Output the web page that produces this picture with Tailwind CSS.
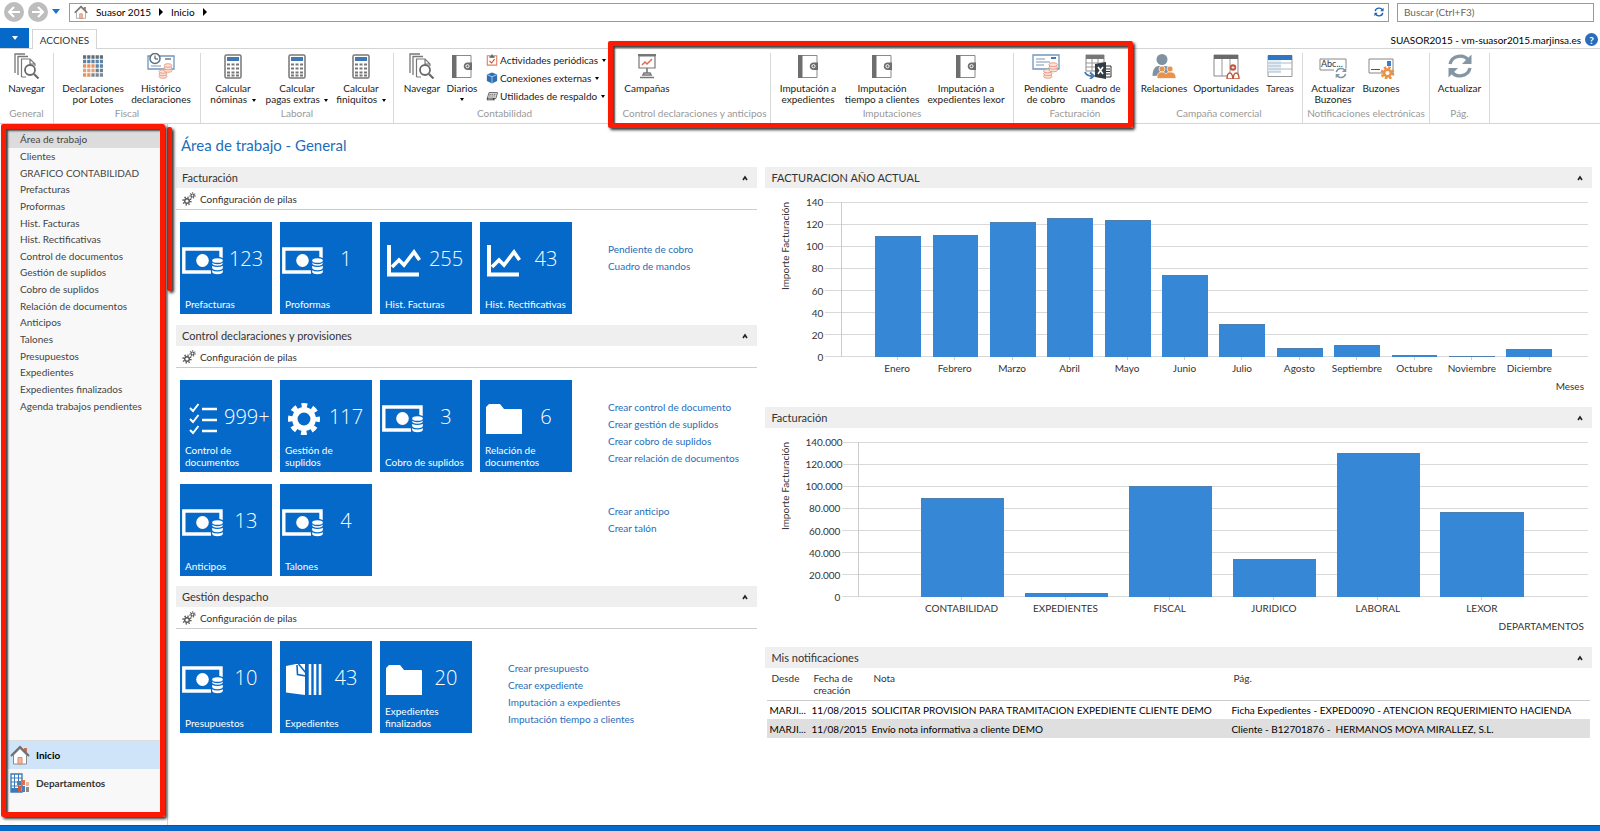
<!doctype html>
<html lang="es">
<head>
  <meta charset="UTF-8">
  <meta name="viewport" content="width=device-width, initial-scale=1.0">
  <script src="https://cdn.jsdelivr.net/npm/@tailwindcss/browser@4"></script>
  <title>Suasor 2015 - Inicio</title>
</head>
<body class="flex h-screen flex-col overflow-hidden bg-white font-['Lato','Open_Sans',sans-serif] text-[10px] leading-3 text-[#333]">

  <!-- Icon sprite -->
  <svg class="hidden">
    <symbol id="i-house" viewBox="0 0 20 20">
      <path d="M14 3h3v5l-3-3z" fill="#c96f4c"/>
      <path d="M3.5 10v9h13v-9L10 3.5z" fill="#fff" stroke="#8a8a8a"/>
      <path d="M1 11 10 2l9 9" fill="none" stroke="#6e6e6e" stroke-width="2"/>
      <path d="M8 12.500h4V19H8z" fill="#f0b8a0" stroke="#d98a6c"/>
    </symbol>
    <symbol id="i-pages" viewBox="0 0 26 26">
      <path d="M1 20V1h10M4 22V3.500h10" fill="none" stroke="#777" stroke-width="1.300"/>
      <path d="M7.500 24V6H16l5 5v2M16 6v5h5M7.500 24H12" fill="none" stroke="#777" stroke-width="1.200"/>
      <circle cx="16" cy="17" r="5" fill="#fff" stroke="#6a6a6a" stroke-width="1.800"/>
      <path d="m20 21 4.500 4.500" stroke="#6a6a6a" stroke-width="2.200"/>
    </symbol>
    <symbol id="i-declgrid" viewBox="0 0 26 26">
      <g stroke-width="3.400" stroke-dasharray="3.200 1" fill="none">
        <path d="M3 4h20" stroke="#5f6f7a"/><path d="M3 8.500h20" stroke="#5b84a8"/>
        <path d="M3 13h12.500" stroke="#e8935f"/><path d="M15.600 13H23" stroke="#5b84a8"/>
        <path d="M3 17.500h12.500" stroke="#e8a07a"/><path d="M15.600 17.500H23" stroke="#6a7f90"/>
        <path d="M3 22h8.300" stroke="#e8935f"/><path d="M11.400 22H23" stroke="#7a8894"/>
      </g>
    </symbol>
    <symbol id="i-coins" viewBox="0 0 14 16">
      <g fill="#fbe3da" stroke="#e59a80" stroke-width=".9">
        <ellipse cx="4.500" cy="13.500" rx="4" ry="1.800"/><ellipse cx="4.500" cy="11" rx="4" ry="1.800"/><ellipse cx="4.500" cy="8.500" rx="4" ry="1.800"/>
        <ellipse cx="9.500" cy="7.500" rx="4" ry="1.800"/><ellipse cx="9.500" cy="5" rx="4" ry="1.800"/><ellipse cx="9.500" cy="2.500" rx="4" ry="1.800"/>
      </g>
    </symbol>
    <symbol id="i-cheque" viewBox="0 0 28 26">
      <path d="M1 2h26v14H1z" fill="#fff" stroke="#6f96bd" stroke-width="1.300"/>
      <path d="M4 6h9M4 9h14M4 12h8" stroke="#7b97b2"/><path d="M19 5h5" stroke="#3f78b5" stroke-width="2"/>
      <use href="#i-coins" x="9" y="9" width="19" height="17"/>
    </symbol>
    <symbol id="i-history" viewBox="0 0 28 26">
      <path d="M1 3h26v13H1z" fill="#fff" stroke="#6f96bd" stroke-width="1.300"/>
      <path d="M4 13h10" stroke="#7b97b2"/><path d="M18 6h6" stroke="#777" stroke-width="1.500"/>
      <circle cx="8" cy="5.500" r="5" fill="#fff" stroke="#5a6f83" stroke-width="1.500"/>
      <path d="M8 2.500v3.500h3" fill="none" stroke="#444"/>
      <use href="#i-coins" x="9" y="10" width="19" height="16"/>
    </symbol>
    <symbol id="i-calc" viewBox="0 0 26 26">
      <rect x="5" y="2" width="16" height="23" rx="1.500" fill="#fff" stroke="#777" stroke-width="1.500"/>
      <path d="M7 4h12v4H7z" fill="#3f78b5"/>
      <path d="M7 11.500h12M7 15.500h12M7 19.500h12M7 22.500h12" stroke="#777" stroke-width="2" stroke-dasharray="3 1.500"/>
    </symbol>
    <symbol id="i-book" viewBox="0 0 26 26">
      <path d="M4 2.500h18v22H4z" fill="#fff" stroke="#8a8a8a"/>
      <path d="M3 2h4.500v23H3z" fill="#6e6e6e"/>
      <path d="M23 9.500h-5a3.800 3.800 0 0 0 0 7.500h5z" fill="#6e6e6e"/>
      <circle cx="18.500" cy="13.200" r="1.600" fill="none" stroke="#fff"/>
    </symbol>
    <symbol id="i-clipboard" viewBox="0 0 14 14">
      <path d="M1.500 2h11v11h-11z" fill="#fff" stroke="#df7f62" stroke-width="1.300"/>
      <path d="M4 3.500h6M7 .5v3" stroke="#555" stroke-width="1.500"/><path d="m4 8 2.500 2.500L10 6" fill="none" stroke="#d9482b" stroke-width="1.300"/>
    </symbol>
    <symbol id="i-cube" viewBox="0 0 14 14">
      <path d="m7 .5 6 2.500v7.500l-6 3-6-3V3z" fill="#2f6fb3"/><path d="m1 3 6 2.500L13 3M7 5.500v8" fill="none" stroke="#b9d3ee"/>
    </symbol>
    <symbol id="i-keys" viewBox="0 0 14 12">
      <path d="M3.500 2h10l-2 7h-10z" fill="#eee" stroke="#555"/><path d="M4 4h8M3.500 6h8" stroke="#555" stroke-dasharray="2 .6"/><path d="M1 8h9v3H1z" fill="#444"/><path d="M2 9.500h6" stroke="#ddd"/>
    </symbol>
    <symbol id="i-board" viewBox="0 0 26 26">
      <path d="M4 1h18v2H4z" fill="#777"/><path d="M5 3h16v12H5z" fill="#fff" stroke="#777" stroke-width="1.200"/>
      <path d="m8 12 3-3 2 2 5-5" fill="none" stroke="#e0694c" stroke-width="1.500"/>
      <path d="M13 15v5M10 20h6l1 2h-8zM6 24.500h14" fill="none" stroke="#777" stroke-width="1.600"/>
    </symbol>
    <symbol id="i-excel" viewBox="0 0 28 26">
      <path d="M2 2h18v16H2z" fill="#fff" stroke="#888"/><path d="M2 2h18v4H2z" fill="#777"/><path d="M2 10h18M2 14h18M8 6v12M14 6v12" stroke="#999"/>
      <path d="M18 13h9v11h-9z" fill="#fff" stroke="#333"/><path d="M20 16h6M20 18.500h6M20 21h6" stroke="#333"/>
      <path d="m11 11 11-2v17l-11-2z" fill="#333c44"/><path d="m14 14 5 7M19 14l-5 7" stroke="#fff" stroke-width="1.600"/>
      <path d="M1 19c1 3 4 4 7 4M6 19.500l4 3.500-4 3" fill="none" stroke="#3f78b5" stroke-width="1.800"/>
    </symbol>
    <symbol id="i-people" viewBox="0 0 26 26">
      <circle cx="11" cy="6.500" r="5.500" fill="#7f92a3"/><path d="M1.500 23c0-7 3-10 6-10h7c4 0 6 4 6 9z" fill="#7f92a3"/>
      <g fill="#ea9248" stroke="#fff" stroke-width=".7"><circle cx="11" cy="16" r="3"/><circle cx="19" cy="16" r="3"/><path d="M6 25.500c0-5 2-6.500 5-6.500 2 0 3 .5 4 2 1-1.500 2-2 4-2 4 0 6 2 6 6.500z"/></g>
    </symbol>
    <symbol id="i-opps" viewBox="0 0 26 26">
      <path d="M1 2h24v21H1z" fill="#fff" stroke="#888"/><path d="M1 2h24v4H1z" fill="#6a6a6a"/><path d="M9 6v17M17 6v17" stroke="#999"/>
      <circle cx="20" cy="14.500" r="3.200" fill="#c2553f"/><path d="M20 13v3M18.500 14.500h3" stroke="#fff" stroke-width=".8"/>
      <path d="M14 26c0-4 1-6 3-6s2.500 2 3 6zM20 26c.5-4 1-6 3-6s3 2 3 6z" fill="#fff" stroke="#c2553f" stroke-width="1.400"/>
    </symbol>
    <symbol id="i-tasks" viewBox="0 0 26 26">
      <path d="M1 2.500h24v21H1z" fill="#fff" stroke="#999"/><path d="M1 2h24v5H1z" fill="#2f77bf"/>
      <path d="M1 7h13v12H1z" fill="#e6edf4"/><path d="M1 10h24M1 13h13M1 16h24M1 19h13" stroke="#a9bccd"/>
    </symbol>
    <symbol id="i-sync" viewBox="0 0 26 26">
      <path d="M3 11C5 2 17 1 21 7" fill="none" stroke="#8496a6" stroke-width="3.400"/><path d="M24.500 1.500v9.500H15z" fill="#8496a6"/>
      <path d="M23 15c-2 9-14 10-18 4" fill="none" stroke="#8496a6" stroke-width="3.400"/><path d="M1.500 24.500V15H11z" fill="#8496a6"/>
    </symbol>
    <symbol id="i-field" viewBox="0 0 28 26">
      <path d="M1 6h26v11H1z" fill="#fff" stroke="#888"/>
      <text x="2" y="14" font-size="9" fill="#333">Abc...</text>
      <path d="M15 15h13v12H15z" fill="#fff"/><use href="#i-sync" x="16" y="14" width="12" height="12"/>
    </symbol>
    <symbol id="i-mail" viewBox="0 0 26 26">
      <path d="M1 6h24v14H1z" fill="#fff" stroke="#888"/><path d="M19 8h4v5h-4z" fill="#3b7cd0"/><path d="M3 16.500h9" stroke="#555"/>
      <circle cx="19.500" cy="20" r="5.500" fill="none" stroke="#ea9248" stroke-width="2.600" stroke-dasharray="2.500 1.820"/>
      <circle cx="19.500" cy="20" r="3.400" fill="#fff" stroke="#ea9248" stroke-width="2.600"/>
    </symbol>
    <symbol id="i-office" viewBox="0 0 20 20">
      <path d="M1 1h11v18H1z" fill="#fff" stroke="#3b7ab8" stroke-width="1.400"/><path d="M1 5h11M1 9h11M1 13h11M4.500 1v14M8.500 1v14" stroke="#3b7ab8"/><path d="M1 15h7v4H1z" fill="#3b7ab8"/>
      <path d="M7 8h4v4H7z" fill="#4a7fb5"/><path d="M11 7h4v5h-4z" fill="#de6f4f"/><path d="M16 9h3v4h-3z" fill="#f0b19b"/>
      <path d="M8 13h3v6H8z" fill="#d9583a"/><path d="M12 13h3v6h-3z" fill="#4a7fb5"/><path d="M16 14h3v5h-3z" fill="#8a8a8a"/>
    </symbol>
    <symbol id="i-gears" viewBox="0 0 14 14">
      <g fill="none" stroke="#555"><circle cx="5" cy="9" r="2.300" stroke-width="1.400"/><circle cx="5" cy="9" r="3.800" stroke-width="1.700" stroke-dasharray="1.300 1.684"/>
      <circle cx="10.500" cy="3.500" r="1.500" stroke-width="1.200"/><circle cx="10.500" cy="3.500" r="2.600" stroke-width="1.300" stroke-dasharray="1 1.330"/></g>
    </symbol>
    <!-- Tile icons -->
    <symbol id="t-money" viewBox="0 0 42 32">
      <path d="M39 13V4H1.800v23H29" fill="none" stroke="#fff" stroke-width="3.400"/>
      <ellipse cx="20.500" cy="15.500" rx="6.300" ry="6.500" fill="#fff"/>
      <g fill="#fff" stroke="#0569c9" stroke-width="1.300"><path d="M29.500 24v2.500c0 4.500 12 4.500 12 0V24z"/><path d="M29.500 20v2.500c0 4.500 12 4.500 12 0V20z"/><path d="M29.500 15v3c0 4.500 12 4.500 12 0v-3z"/><ellipse cx="35.500" cy="15.500" rx="6" ry="3"/></g>
    </symbol>
    <symbol id="t-line" viewBox="0 0 42 32">
      <path d="M7 0v29.500h30" fill="none" stroke="#fff" stroke-width="4"/>
      <path d="m10 22 7-7 5 5 10-13 5.500 8" fill="none" stroke="#fff" stroke-width="3.600"/>
    </symbol>
    <symbol id="t-checks" viewBox="0 0 42 32">
      <path d="m8 5 3 3 5.500-7M8 16l3 3 5.500-7M8 27l3 3 5.500-7" fill="none" stroke="#fff" stroke-width="2"/>
      <path d="M20 6h15M20 17h15M20 28h15" stroke="#fff" stroke-width="2.600"/>
    </symbol>
    <symbol id="t-gear" viewBox="0 0 42 32">
      <circle cx="22" cy="16" r="9.200" fill="none" stroke="#fff" stroke-width="5.500"/>
      <circle cx="22" cy="16" r="13.500" fill="none" stroke="#fff" stroke-width="5" stroke-dasharray="5.600 5" stroke-dashoffset="2.800"/>
    </symbol>
    <symbol id="t-folder" viewBox="0 0 42 32">
      <path d="M4 31V4l3-3h11l4 5h17.500l.5 1v24z" fill="#fff"/>
    </symbol>
    <symbol id="t-docs" viewBox="0 0 42 32">
      <path d="M4 2 14 0h9v31L4 28.500z" fill="#fff"/><path d="m15 1 .5 9.500 8.500 1.500M16.500 0 24 9" fill="none" stroke="#0569c9" stroke-width="1.600"/>
      <path d="M23.500 0h3v31h-3z" fill="#0569c9"/><path d="M28 0v31M33 0v31M38 0v31" stroke="#fff" stroke-width="2.600"/>
    </symbol>
  </svg>

  <!-- Address bar -->
  <header class="flex h-6 shrink-0 items-center pr-1.5">
    <div class="flex w-[69px] items-center gap-1 pl-1">
      <button aria-label="Atrás" class="size-5 rounded-full bg-[#bdbdbd]"><svg viewBox="0 0 20 20"><path d="M16 10H5M10 5l-5 5 5 5" fill="none" stroke="#fff" stroke-width="2"/></svg></button>
      <button aria-label="Adelante" class="size-5 rounded-full bg-[#bdbdbd]"><svg viewBox="0 0 20 20"><path d="M4 10h11M10 5l5 5-5 5" fill="none" stroke="#fff" stroke-width="2"/></svg></button>
      <button aria-label="Historial"><svg class="h-1.5 w-2" viewBox="0 0 8 6"><path d="M0 0h8L4 5z" fill="#1b74c9"/></svg></button>
    </div>
    <nav class="flex h-[19px] flex-1 items-center gap-2 border border-[#9a9a9a] px-1 text-black">
      <svg class="size-3.5"><use href="#i-house"/></svg>
      <a href="#">Suasor 2015</a>
      <svg class="h-2 w-1" viewBox="0 0 4 8"><path d="M0 0v8l4-4z"/></svg>
      <a href="#">Inicio</a>
      <svg class="h-2 w-1" viewBox="0 0 4 8"><path d="M0 0v8l4-4z"/></svg>
      <button aria-label="Actualizar" class="ml-auto"><svg class="size-2.5" viewBox="0 0 12 12"><path d="M1.500 5c.5-4 6.500-5 8.500-1.500M10.500 7c-.5 4-6.500 5-8.500 1.500" fill="none" stroke="#1b5fb0" stroke-width="1.600"/><path d="M11.500 1v4h-4zM.5 11V7h4z" fill="#1b5fb0"/></svg></button>
    </nav>
    <input type="search" aria-label="Buscar" placeholder="Buscar (Ctrl+F3)" class="ml-2 h-[19px] w-[197px] border border-[#9a9a9a] px-1.5 outline-none placeholder:text-[#666]">
  </header>

  <!-- Tabs -->
  <div class="flex h-6 shrink-0 items-end">
    <button aria-label="Menú" class="flex h-5 w-[29px] items-center justify-center bg-[#0569c9]"><svg class="h-1 w-1.5" viewBox="0 0 6 4"><path d="M0 0h6L3 4z" fill="#fff"/></svg></button>
    <button class="relative z-10 -mb-px ml-[3px] h-5 w-[65px] border border-b-0 border-[#d4d4d4] bg-white">ACCIONES</button>
    <span class="ml-auto pb-0.5 text-black">SUASOR2015 - vm-suasor2015.marjinsa.es</span>
    <button aria-label="Ayuda" class="mr-0.5 mb-0.5 ml-1 size-[13px] rounded-full bg-[#2b6cb8] font-bold text-white">?</button>
  </div>

  <!-- Ribbon -->
  <div class="relative flex h-[76px] shrink-0 border-y border-[#d4d4d4] pt-1 text-center leading-[11px] text-[#222]">
    <section class="flex w-[54px] flex-col border-r border-[#d9d9d9]">
      <div class="flex flex-1 justify-center">
        <button class="flex w-13 flex-col items-center gap-1"><svg class="h-[26px] w-7"><use href="#i-pages"/></svg>Navegar</button>
      </div>
      <h2 class="h-[15px] whitespace-nowrap text-[#999]">General</h2>
    </section>
    <section class="flex w-[147px] flex-col border-r border-[#d9d9d9]">
      <div class="flex flex-1 justify-center">
        <button class="flex w-17 flex-col items-center gap-1"><svg class="h-[26px] w-7"><use href="#i-declgrid"/></svg><span>Declaraciones<br>por Lotes</span></button>
        <button class="flex w-17 flex-col items-center gap-1"><svg class="h-[26px] w-7"><use href="#i-history"/></svg><span>Histórico<br>declaraciones</span></button>
      </div>
      <h2 class="h-[15px] whitespace-nowrap text-[#999]">Fiscal</h2>
    </section>
    <section class="flex w-[193px] flex-col border-r border-[#d9d9d9]">
      <div class="flex flex-1 justify-center">
        <button class="flex w-16 flex-col items-center gap-1"><svg class="h-[26px] w-7"><use href="#i-calc"/></svg><span>Calcular<br>nóminas <svg class="ml-0.5 inline h-[3px] w-1" viewBox="0 0 4 3"><path d="M0 0h4L2 3z"/></svg></span></button>
        <button class="flex w-16 flex-col items-center gap-1"><svg class="h-[26px] w-7"><use href="#i-calc"/></svg><span class="whitespace-nowrap">Calcular<br>pagas extras <svg class="ml-0.5 inline h-[3px] w-1" viewBox="0 0 4 3"><path d="M0 0h4L2 3z"/></svg></span></button>
        <button class="flex w-16 flex-col items-center gap-1"><svg class="h-[26px] w-7"><use href="#i-calc"/></svg><span>Calcular<br>finiquitos <svg class="ml-0.5 inline h-[3px] w-1" viewBox="0 0 4 3"><path d="M0 0h4L2 3z"/></svg></span></button>
      </div>
      <h2 class="h-[15px] whitespace-nowrap text-[#999]">Laboral</h2>
    </section>
    <section class="flex w-[213px] flex-col">
      <div class="flex flex-1 pl-2">
        <button class="flex w-10 flex-col items-center gap-1"><svg class="h-[26px] w-7"><use href="#i-pages"/></svg>Navegar</button>
        <button class="flex w-10 flex-col items-center gap-1"><svg class="h-[26px] w-7"><use href="#i-book"/></svg>Diarios<svg class="h-[3px] w-1" viewBox="0 0 4 3"><path d="M0 0h4L2 3z"/></svg></button>
        <div class="flex flex-col gap-1 pl-1 whitespace-nowrap">
          <button class="flex h-3.5 items-center gap-0.5"><svg class="size-3"><use href="#i-clipboard"/></svg>Actividades periódicas <svg class="ml-0.5 h-[3px] w-1" viewBox="0 0 4 3"><path d="M0 0h4L2 3z"/></svg></button>
          <button class="flex h-3.5 items-center gap-0.5"><svg class="size-3"><use href="#i-cube"/></svg>Conexiones externas <svg class="ml-0.5 h-[3px] w-1" viewBox="0 0 4 3"><path d="M0 0h4L2 3z"/></svg></button>
          <button class="flex h-3.5 items-center gap-0.5"><svg class="size-3"><use href="#i-keys"/></svg>Utilidades de respaldo <svg class="ml-0.5 h-[3px] w-1" viewBox="0 0 4 3"><path d="M0 0h4L2 3z"/></svg></button>
        </div>
      </div>
      <h2 class="h-[15px] pl-2 whitespace-nowrap text-[#999]">Contabilidad</h2>
    </section>
    <section class="flex w-[164px] flex-col border-r border-[#d9d9d9]">
      <div class="flex flex-1 pl-2">
        <button class="flex w-16 flex-col items-center gap-1"><svg class="h-[26px] w-7"><use href="#i-board"/></svg>Campañas</button>
      </div>
      <h2 class="h-[15px] pl-3 whitespace-nowrap text-[#999]">Control declaraciones y anticipos</h2>
    </section>
    <section class="flex w-[243px] flex-col border-r border-[#d9d9d9]">
      <div class="flex flex-1 justify-center">
        <button class="flex w-17 flex-col items-center gap-1"><svg class="h-[26px] w-7"><use href="#i-book"/></svg><span>Imputación a<br>expedientes</span></button>
        <button class="flex w-20 flex-col items-center gap-1"><svg class="h-[26px] w-7"><use href="#i-book"/></svg><span>Imputación<br>tiempo a clientes</span></button>
        <button class="flex w-22 flex-col items-center gap-1"><svg class="h-[26px] w-7"><use href="#i-book"/></svg><span>Imputación a<br>expedientes lexor</span></button>
      </div>
      <h2 class="h-[15px] whitespace-nowrap text-[#999]">Imputaciones</h2>
    </section>
    <section class="flex w-[122px] flex-col">
      <div class="flex flex-1 pl-1.5">
        <button class="flex w-13 flex-col items-center gap-1"><svg class="h-[26px] w-7"><use href="#i-cheque"/></svg><span>Pendiente<br>de cobro</span></button>
        <button class="flex w-13 flex-col items-center gap-1"><svg class="h-[26px] w-7"><use href="#i-excel"/></svg><span>Cuadro de<br>mandos</span></button>
      </div>
      <h2 class="h-[15px] whitespace-nowrap text-[#999]">Facturación</h2>
    </section>
    <section class="flex w-[167px] flex-col border-r border-[#d9d9d9]">
      <div class="flex flex-1">
        <button class="flex w-14 flex-col items-center gap-1"><svg class="h-[26px] w-7"><use href="#i-people"/></svg>Relaciones</button>
        <button class="flex w-17 flex-col items-center gap-1"><svg class="h-[26px] w-7"><use href="#i-opps"/></svg>Oportunidades</button>
        <button class="flex w-10 flex-col items-center gap-1"><svg class="h-[26px] w-7"><use href="#i-tasks"/></svg>Tareas</button>
      </div>
      <h2 class="h-[15px] whitespace-nowrap text-[#999]">Campaña comercial</h2>
    </section>
    <section class="flex w-[127px] flex-col border-r border-[#d9d9d9]">
      <div class="flex flex-1 pl-1">
        <button class="flex w-13 flex-col items-center gap-1"><svg class="h-[26px] w-7"><use href="#i-field"/></svg><span>Actualizar<br>Buzones</span></button>
        <button class="flex w-11 flex-col items-center gap-1"><svg class="h-[26px] w-7"><use href="#i-mail"/></svg>Buzones</button>
      </div>
      <h2 class="h-[15px] whitespace-nowrap text-[#999]">Notificaciones electrónicas</h2>
    </section>
    <section class="flex w-[60px] flex-col border-r border-[#d9d9d9]">
      <div class="flex flex-1 justify-center">
        <button class="flex w-14 flex-col items-center gap-1"><svg class="h-[26px] w-7"><use href="#i-sync"/></svg>Actualizar</button>
      </div>
      <h2 class="h-[15px] whitespace-nowrap text-[#999]">Pág.</h2>
    </section>
    <!-- Ribbon highlight -->
    <div class="pointer-events-none absolute -top-2 left-[608px] h-[87px] w-[525px] rounded-xs border-5 border-[#fb1a04] shadow-[2px_2px_3px_#333,inset_2px_2px_2px_#444]"></div>
  </div>

  <div class="flex min-h-0 flex-1">
    <!-- Sidebar -->
    <aside class="relative flex w-[168px] shrink-0 flex-col border-r border-[#d4d4d4] pr-1.5 pb-3 pl-1.5">
      <div class="flex flex-1 flex-col bg-[#f8f8f8] pt-[7px]">
        <ul class="grid h-[283px] shrink-0 auto-rows-fr text-[#444]">
          <li class="flex items-center bg-[#dcdcdc] pl-3.5"><a href="#">Área de trabajo</a></li>
          <li class="flex items-center pl-3.5"><a href="#">Clientes</a></li>
          <li class="flex items-center pl-3.5"><a href="#">GRAFICO CONTABILIDAD</a></li>
          <li class="flex items-center pl-3.5"><a href="#">Prefacturas</a></li>
          <li class="flex items-center pl-3.5"><a href="#">Proformas</a></li>
          <li class="flex items-center pl-3.5"><a href="#">Hist. Facturas</a></li>
          <li class="flex items-center pl-3.5"><a href="#">Hist. Rectificativas</a></li>
          <li class="flex items-center pl-3.5"><a href="#">Control de documentos</a></li>
          <li class="flex items-center pl-3.5"><a href="#">Gestión de suplidos</a></li>
          <li class="flex items-center pl-3.5"><a href="#">Cobro de suplidos</a></li>
          <li class="flex items-center pl-3.5"><a href="#">Relación de documentos</a></li>
          <li class="flex items-center pl-3.5"><a href="#">Anticipos</a></li>
          <li class="flex items-center pl-3.5"><a href="#">Talones</a></li>
          <li class="flex items-center pl-3.5"><a href="#">Presupuestos</a></li>
          <li class="flex items-center pl-3.5"><a href="#">Expedientes</a></li>
          <li class="flex items-center pl-3.5"><a href="#">Expedientes finalizados</a></li>
          <li class="flex items-center pl-3.5"><a href="#">Agenda trabajos pendientes</a></li>
        </ul>
        <nav class="mt-auto mb-4 border-t border-[#ddd] font-bold">
          <a href="#" class="flex h-7 items-center gap-1.5 bg-[#cfe4f8] pl-1 text-black"><svg class="size-5"><use href="#i-house"/></svg>Inicio</a>
          <a href="#" class="flex h-7 items-center gap-1.5 pl-1"><svg class="size-5"><use href="#i-office"/></svg>Departamentos</a>
        </nav>
      </div>
      <!-- Sidebar highlight -->
      <div class="pointer-events-none absolute top-[3px] left-[167px] h-[164px] w-[5px] rounded-xs bg-[#fb1a04] shadow-[2px_2px_3px_#333]"></div>
      <div class="pointer-events-none absolute top-0 bottom-2 left-px w-[164px] rounded-xs border-5 border-[#fb1a04] shadow-[2px_2px_3px_#333,inset_2px_2px_2px_#444]"></div>
    </aside>

    <main class="flex min-w-0 flex-1 flex-col pt-[11px] pr-2 pl-2">
      <h1 class="h-8 pl-[5px] text-[15px] leading-5 text-[#1f6dba]">Área de trabajo - General</h1>
      <div class="grid grid-cols-[581fr_826fr] gap-2">

        <!-- Left column: tile groups -->
        <div>
          <section>
            <h2 class="flex h-[21px] items-center justify-between bg-[#efefef] px-1.5 pr-2 text-[11px]">Facturación <button aria-label="Contraer"><svg class="h-1.5 w-2" viewBox="0 0 8 6"><path d="M2 5l2-3 2 3" fill="none" stroke="#222" stroke-width="1.600"/></svg></button></h2>
            <button class="flex h-[22px] w-full items-center gap-1 border-b border-[#ccc] pl-1.5"><svg class="size-3.5"><use href="#i-gears"/></svg>Configuración de pilas</button>
            <div class="flex gap-9 pt-3 pb-[11px] pl-1">
              <div class="grid grid-cols-[repeat(4,92px)] gap-x-2">
                <button class="flex h-[92px] flex-col bg-[#0569c9] px-0.5 pt-[23px] pb-1 text-left text-white"><span class="flex w-full"><svg class="h-8 w-[42px] shrink-0"><use href="#t-money"/></svg><span class="flex flex-1 justify-center pr-0.5 font-['Open_Sans'] text-[20px] leading-7 font-light">123</span></span><span class="mt-auto pl-[3px]">Prefacturas</span></button>
                <button class="flex h-[92px] flex-col bg-[#0569c9] px-0.5 pt-[23px] pb-1 text-left text-white"><span class="flex w-full"><svg class="h-8 w-[42px] shrink-0"><use href="#t-money"/></svg><span class="flex flex-1 justify-center pr-0.5 font-['Open_Sans'] text-[20px] leading-7 font-light">1</span></span><span class="mt-auto pl-[3px]">Proformas</span></button>
                <button class="flex h-[92px] flex-col bg-[#0569c9] px-0.5 pt-[23px] pb-1 text-left text-white"><span class="flex w-full"><svg class="h-8 w-[42px] shrink-0"><use href="#t-line"/></svg><span class="flex flex-1 justify-center pr-0.5 font-['Open_Sans'] text-[20px] leading-7 font-light">255</span></span><span class="mt-auto pl-[3px]">Hist. Facturas</span></button>
                <button class="flex h-[92px] flex-col bg-[#0569c9] px-0.5 pt-[23px] pb-1 text-left text-white"><span class="flex w-full"><svg class="h-8 w-[42px] shrink-0"><use href="#t-line"/></svg><span class="flex flex-1 justify-center pr-0.5 font-['Open_Sans'] text-[20px] leading-7 font-light">43</span></span><span class="mt-auto pl-[3px] whitespace-nowrap">Hist. Rectificativas</span></button>
              </div>
              <div class="flex flex-col pt-[19px] leading-[17px] text-[#1f6dba]">
                <a href="#">Pendiente de cobro</a>
                <a href="#">Cuadro de mandos</a>
              </div>
            </div>
          </section>

          <section>
            <h2 class="flex h-[21px] items-center justify-between bg-[#efefef] px-1.5 pr-2 text-[11px]">Control declaraciones y provisiones <button aria-label="Contraer"><svg class="h-1.5 w-2" viewBox="0 0 8 6"><path d="M2 5l2-3 2 3" fill="none" stroke="#222" stroke-width="1.600"/></svg></button></h2>
            <button class="flex h-[22px] w-full items-center gap-1 border-b border-[#ccc] pl-1.5"><svg class="size-3.5"><use href="#i-gears"/></svg>Configuración de pilas</button>
            <div class="flex gap-9 pt-3 pl-1">
              <div class="grid grid-cols-[repeat(4,92px)] gap-x-2">
                <button class="flex h-[92px] flex-col bg-[#0569c9] px-0.5 pt-[23px] pb-1 text-left text-white"><span class="flex w-full"><svg class="h-8 w-[42px] shrink-0"><use href="#t-checks"/></svg><span class="flex flex-1 justify-center pr-0.5 font-['Open_Sans'] text-[20px] leading-7 font-light">999+</span></span><span class="mt-auto pl-[3px]">Control de<br>documentos</span></button>
                <button class="flex h-[92px] flex-col bg-[#0569c9] px-0.5 pt-[23px] pb-1 text-left text-white"><span class="flex w-full"><svg class="h-8 w-[42px] shrink-0"><use href="#t-gear"/></svg><span class="flex flex-1 justify-center pr-0.5 font-['Open_Sans'] text-[20px] leading-7 font-light">117</span></span><span class="mt-auto pl-[3px]">Gestión de<br>suplidos</span></button>
                <button class="flex h-[92px] flex-col bg-[#0569c9] px-0.5 pt-[23px] pb-1 text-left text-white"><span class="flex w-full"><svg class="h-8 w-[42px] shrink-0"><use href="#t-money"/></svg><span class="flex flex-1 justify-center pr-0.5 font-['Open_Sans'] text-[20px] leading-7 font-light">3</span></span><span class="mt-auto pl-[3px]">Cobro de suplidos</span></button>
                <button class="flex h-[92px] flex-col bg-[#0569c9] px-0.5 pt-[23px] pb-1 text-left text-white"><span class="flex w-full"><svg class="h-8 w-[42px] shrink-0"><use href="#t-folder"/></svg><span class="flex flex-1 justify-center pr-0.5 font-['Open_Sans'] text-[20px] leading-7 font-light">6</span></span><span class="mt-auto pl-[3px]">Relación de<br>documentos</span></button>
              </div>
              <div class="flex flex-col pt-[19px] leading-[17px] text-[#1f6dba]">
                <a href="#">Crear control de documento</a>
                <a href="#">Crear gestión de suplidos</a>
                <a href="#">Crear cobro de suplidos</a>
                <a href="#">Crear relación de documentos</a>
              </div>
            </div>
            <div class="flex gap-9 pt-3 pb-2.5 pl-1">
              <div class="grid grid-cols-[repeat(4,92px)] gap-x-2">
                <button class="flex h-[92px] flex-col bg-[#0569c9] px-0.5 pt-[23px] pb-1 text-left text-white"><span class="flex w-full"><svg class="h-8 w-[42px] shrink-0"><use href="#t-money"/></svg><span class="flex flex-1 justify-center pr-0.5 font-['Open_Sans'] text-[20px] leading-7 font-light">13</span></span><span class="mt-auto pl-[3px]">Anticipos</span></button>
                <button class="flex h-[92px] flex-col bg-[#0569c9] px-0.5 pt-[23px] pb-1 text-left text-white"><span class="flex w-full"><svg class="h-8 w-[42px] shrink-0"><use href="#t-money"/></svg><span class="flex flex-1 justify-center pr-0.5 font-['Open_Sans'] text-[20px] leading-7 font-light">4</span></span><span class="mt-auto pl-[3px]">Talones</span></button>
              </div>
              <div class="flex flex-col pt-[19px] leading-[17px] text-[#1f6dba]">
                <a href="#">Crear anticipo</a>
                <a href="#">Crear talón</a>
              </div>
            </div>
          </section>

          <section>
            <h2 class="flex h-[21px] items-center justify-between bg-[#efefef] px-1.5 pr-2 text-[11px]">Gestión despacho <button aria-label="Contraer"><svg class="h-1.5 w-2" viewBox="0 0 8 6"><path d="M2 5l2-3 2 3" fill="none" stroke="#222" stroke-width="1.600"/></svg></button></h2>
            <button class="flex h-[22px] w-full items-center gap-1 border-b border-[#ccc] pl-1.5"><svg class="size-3.5"><use href="#i-gears"/></svg>Configuración de pilas</button>
            <div class="flex gap-9 pt-3 pl-1">
              <div class="grid grid-cols-[repeat(3,92px)] gap-x-2">
                <button class="flex h-[92px] flex-col bg-[#0569c9] px-0.5 pt-[23px] pb-1 text-left text-white"><span class="flex w-full"><svg class="h-8 w-[42px] shrink-0"><use href="#t-money"/></svg><span class="flex flex-1 justify-center pr-0.5 font-['Open_Sans'] text-[20px] leading-7 font-light">10</span></span><span class="mt-auto pl-[3px]">Presupuestos</span></button>
                <button class="flex h-[92px] flex-col bg-[#0569c9] px-0.5 pt-[23px] pb-1 text-left text-white"><span class="flex w-full"><svg class="h-8 w-[42px] shrink-0"><use href="#t-docs"/></svg><span class="flex flex-1 justify-center pr-0.5 font-['Open_Sans'] text-[20px] leading-7 font-light">43</span></span><span class="mt-auto pl-[3px]">Expedientes</span></button>
                <button class="flex h-[92px] flex-col bg-[#0569c9] px-0.5 pt-[23px] pb-1 text-left text-white"><span class="flex w-full"><svg class="h-8 w-[42px] shrink-0"><use href="#t-folder"/></svg><span class="flex flex-1 justify-center pr-0.5 font-['Open_Sans'] text-[20px] leading-7 font-light">20</span></span><span class="mt-auto pl-[3px]">Expedientes<br>finalizados</span></button>
              </div>
              <div class="flex flex-col pt-[19px] leading-[17px] text-[#1f6dba]">
                <a href="#">Crear presupuesto</a>
                <a href="#">Crear expediente</a>
                <a href="#">Imputación a expedientes</a>
                <a href="#">Imputación tiempo a clientes</a>
              </div>
            </div>
          </section>
        </div>

        <!-- Right column: charts and notifications -->
        <div>
          <section>
            <h2 class="flex h-[21px] items-center justify-between bg-[#efefef] px-1.5 pr-2 text-[11px]">FACTURACION AÑO ACTUAL <button aria-label="Contraer"><svg class="h-1.5 w-2" viewBox="0 0 8 6"><path d="M2 5l2-3 2 3" fill="none" stroke="#222" stroke-width="1.600"/></svg></button></h2>
            <div id="chart-months" class="h-[219px]"></div>
          </section>
          <section>
            <h2 class="flex h-[21px] items-center justify-between bg-[#efefef] px-1.5 pr-2 text-[11px]">Facturación <button aria-label="Contraer"><svg class="h-1.5 w-2" viewBox="0 0 8 6"><path d="M2 5l2-3 2 3" fill="none" stroke="#222" stroke-width="1.600"/></svg></button></h2>
            <div id="chart-departments" class="h-[219px]"></div>
          </section>
          <section>
            <h2 class="flex h-[21px] items-center justify-between bg-[#efefef] px-1.5 pr-2 text-[11px]">Mis notificaciones <button aria-label="Contraer"><svg class="h-1.5 w-2" viewBox="0 0 8 6"><path d="M2 5l2-3 2 3" fill="none" stroke="#222" stroke-width="1.600"/></svg></button></h2>
            <div class="px-0.5">
              <table class="w-full table-fixed text-left">
                <thead>
                  <tr class="h-8 border-b border-[#ccc] align-top">
                    <th class="w-[42px] pt-1 pl-1 font-normal">Desde</th>
                    <th class="w-[60px] pt-1 pl-1 font-normal">Fecha de<br>creación</th>
                    <th class="w-[360px] pt-1 pl-1 font-normal">Nota</th>
                    <th class="pt-1 pl-1 font-normal">Pág.</th>
                  </tr>
                </thead>
                <tbody class="whitespace-nowrap text-black">
                  <tr class="h-[19px]"><td class="pl-0.5">MARJI...</td><td class="pl-0.5">11/08/2015</td><td class="pl-0.5">SOLICITAR PROVISION PARA TRAMITACION EXPEDIENTE CLIENTE DEMO</td><td class="pl-0.5">Ficha Expedientes - EXPED0090 - ATENCION REQUERIMIENTO HACIENDA</td></tr>
                  <tr class="h-[19px] bg-[#dfdfdf]"><td class="pl-0.5">MARJI...</td><td class="pl-0.5">11/08/2015</td><td class="pl-0.5">Envío nota informativa a cliente DEMO</td><td class="pl-0.5">Cliente - B12701876 -&nbsp; HERMANOS MOYA MIRALLEZ, S.L.</td></tr>
                </tbody>
              </table>
            </div>
          </section>
        </div>
      </div>
    </main>
  </div>

  <footer class="h-1.5 shrink-0 border-t border-[#1d4f86] bg-[#0569c9]"></footer>

  <script>
    function drawChart(id, chart) {
      const labels = chart.ticks.map(t => `<span>${t}</span>`).join('');
      const lines = chart.ticks.map(() => '<div class="h-px bg-[#d9d9d9]"></div>').join('');
      const bars = chart.data.map(d => `
        <div class="flex h-full flex-1 items-end justify-center">
          <div class="w-4/5 border-t border-[#4f7fae] bg-[#3688d6]" style="height:${d[1] / chart.max * 100}%"></div>
        </div>`).join('');
      const names = chart.data.map(d => `
        <div class="flex w-0 flex-1 flex-col items-center"><i class="h-[3px] w-px bg-[#ccc]"></i><span>${d[0]}</span></div>`).join('');

      document.getElementById(id).innerHTML = `
        <div class="flex h-full pt-3.5 pr-1 leading-4">
          <div class="flex h-[88px] w-10 items-center justify-center"><span class="[writing-mode:vertical-rl] rotate-180 whitespace-nowrap">Importe Facturación</span></div>
          <div class="-mt-2 flex h-[171px] ${chart.labelWidth} flex-col justify-between text-right">${labels}</div>
          <div class="min-w-0 flex-1 pl-0.5">
            <div class="relative h-[155px]">
              <div class="absolute inset-0 flex flex-col justify-between">${lines}</div>
              <div class="relative ml-4 flex h-full border-l border-[#ccc] ${chart.pad}">${bars}</div>
            </div>
            <div class="ml-4 flex ${chart.pad}">${names}</div>
            <p class="pt-0.5 pr-1 text-right">${chart.axis}</p>
          </div>
        </div>`;
    }

    drawChart('chart-months', {
      axis: 'Meses',
      max: 140,
      labelWidth: 'w-[18px]',
      pad: 'pl-[27px] pr-[30px]',
      ticks: ['140', '120', '100', '80', '60', '40', '20', '0'],
      data: [['Enero', 109], ['Febrero', 110], ['Marzo', 122], ['Abril', 126], ['Mayo', 124], ['Junio', 74], ['Julio', 29.5],
        ['Agosto', 8], ['Septiembre', 11], ['Octubre', 2], ['Noviembre', 1], ['Diciembre', 7]]
    });

    drawChart('chart-departments', {
      axis: 'DEPARTAMENTOS',
      max: 140000,
      labelWidth: 'w-[35px]',
      pad: 'pl-[51px] pr-[54px]',
      ticks: ['140.000', '120.000', '100.000', '80.000', '60.000', '40.000', '20.000', '0'],
      data: [['CONTABILIDAD', 89000], ['EXPEDIENTES', 4000], ['FISCAL', 100000], ['JURIDICO', 34000], ['LABORAL', 130000], ['LEXOR', 77000]]
    });
  </script>
</body>
</html>
